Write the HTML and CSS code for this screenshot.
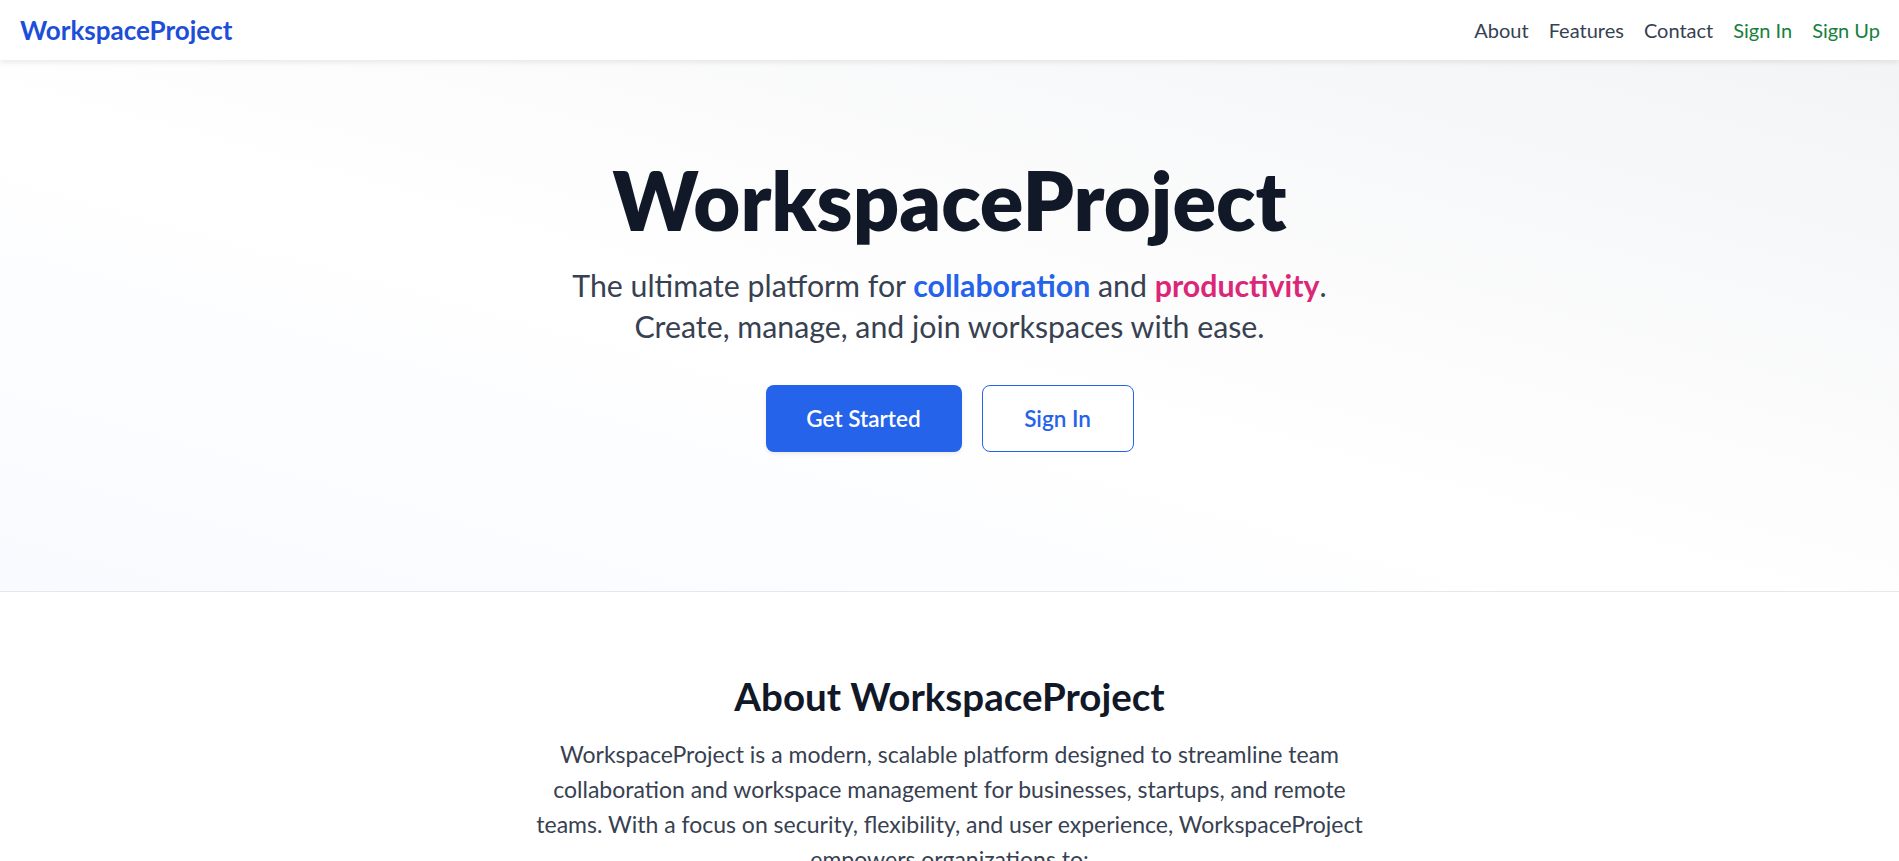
FILE: index.html
```html
<!DOCTYPE html>
<html lang="en">
<head>
<meta charset="utf-8">
<title>WorkspaceProject</title>
<link rel="stylesheet" href="styles.css">
</head>
<body>
<header class="nav">
  <a class="logo" href="#">WorkspaceProject</a>
  <nav class="links">
    <a class="link" href="#about">About</a>
    <a class="link" href="#features">Features</a>
    <a class="link" href="#contact">Contact</a>
    <a class="link link-green" href="#">Sign In</a>
    <a class="link link-green" href="#">Sign Up</a>
  </nav>
</header>
<main>
  <section class="hero">
    <h1 class="hero-title">WorkspaceProject</h1>
    <p class="hero-sub">The ultimate platform for <span class="hl-blue">collaboration</span> and <span class="hl-pink">productivity</span>.<br>Create, manage, and join workspaces with ease.</p>
    <div class="hero-actions">
      <a class="btn btn-primary" href="#">Get Started</a>
      <a class="btn btn-outline" href="#">Sign In</a>
    </div>
  </section>
  <section class="about" id="about">
    <h2 class="about-title">About WorkspaceProject</h2>
    <p class="about-text">WorkspaceProject is a modern, scalable platform designed to streamline team collaboration and workspace management for businesses, startups, and remote teams. With a focus on security, flexibility, and user experience, WorkspaceProject empowers organizations to:</p>
    <ul class="about-list">
      <li>Create and manage multiple workspaces</li>
      <li>Invite and collaborate with team members</li>
      <li>Organize projects, tasks, and files</li>
    </ul>
  </section>
</main>
</body>
</html>
```

FILE: styles.css
```css
* { box-sizing: border-box; }
html, body { margin: 0; padding: 0; }
body {
  font-family: "Lato", "Noto Sans", sans-serif;
  background: #ffffff;
  color: #111827;
}
a { text-decoration: none; }

.nav {
  height: 60px;
  display: flex;
  align-items: center;
  justify-content: space-between;
  padding: 0 19px 0 20px;
  background: #ffffff;
  box-shadow: 0 2px 6px rgba(0, 0, 0, 0.09);
  position: relative;
  z-index: 1;
}
.logo {
  font-size: 26px;
  font-weight: 700;
  color: #1d4ed8;
}
.links {
  display: flex;
  gap: 20px;
}
.link {
  font-size: 20px;
  color: #374151;
}
.link-green { color: #15803d; }

.hero {
  height: 532px;
  display: flex;
  flex-direction: column;
  align-items: center;
  padding-top: 92px;
  background: linear-gradient(to top right, #f8faff 0%, #ffffff 45%, #f3f4f6 100%);
  border-bottom: 1px solid #e5e7eb;
  text-align: center;
}
.hero-title {
  margin: 0;
  font-size: 81px;
  line-height: 96px;
  font-weight: 800;
  color: #111827;
}
.hero-sub {
  margin: 17px 0 0;
  font-size: 30.3px;
  line-height: 41px;
  color: #374151;
}
.hl-blue { color: #2563eb; font-weight: 700; }
.hl-pink { color: #db2777; font-weight: 700; }
.hero-actions {
  display: flex;
  gap: 20px;
  margin-top: 38px;
}
.btn {
  height: 67px;
  display: flex;
  align-items: center;
  justify-content: center;
  font-size: 22.5px;
  font-weight: 600;
  border-radius: 8px;
}
.btn-primary {
  width: 196px;
  background: #2563eb;
  color: #ffffff;
  box-shadow: 0 2px 4px rgba(0, 0, 0, 0.08);
}
.btn-outline {
  width: 152px;
  border: 1px solid #2563eb;
  color: #2563eb;
  background: #ffffff;
}

.about {
  display: flex;
  flex-direction: column;
  align-items: center;
  padding-top: 82px;
  text-align: center;
}
.about-title {
  margin: 0;
  font-size: 38.5px;
  line-height: 44px;
  font-weight: 700;
  color: #111827;
}
.about-text {
  width: 850px;
  margin: 19px 0 0;
  font-size: 23px;
  line-height: 35px;
  color: #374151;
}
.about-list {
  font-size: 22px;
  line-height: 35px;
  color: #374151;
  text-align: left;
}
```
